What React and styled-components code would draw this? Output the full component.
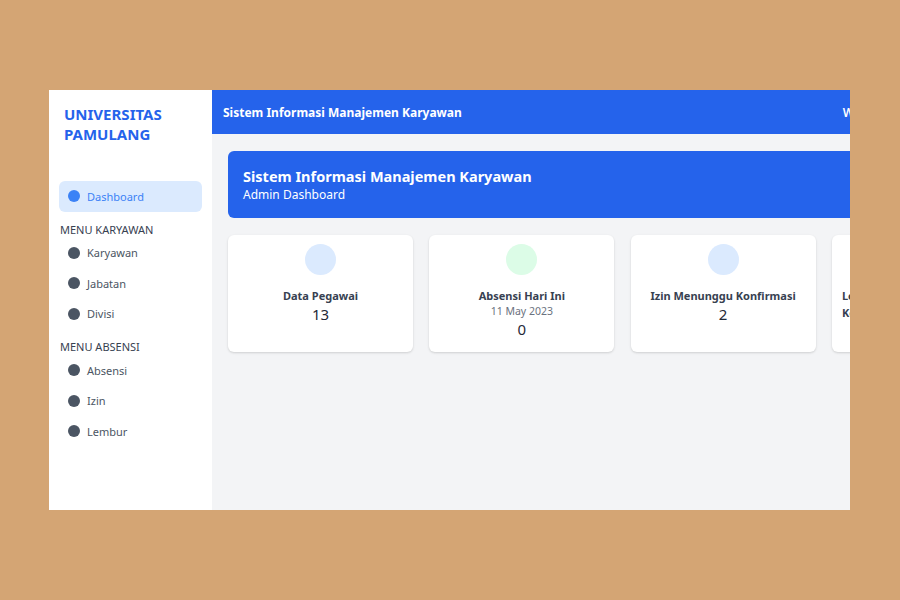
import styled, { createGlobalStyle } from 'styled-components';

const GlobalStyle = createGlobalStyle`
	* {
		box-sizing: border-box;
	}

	body {
		margin: 0;
		background: #d4a574;
		font-family: 'Noto Sans', 'Open Sans', sans-serif;
	}
`;

const Page = styled.div`
	width: 900px;
	height: 600px;
	padding: 90px 50px 90px 49px;
`;

const Frame = styled.div`
	width: 801px;
	height: 420px;
	overflow: hidden;
	display: flex;
`;

const Sidebar = styled.aside`
	flex: 0 0 163px;
	background: #ffffff;
	padding: 14px 10px;
`;

const Brand = styled.h1`
	margin: 0 0 37px 5px;
	font-size: 15px;
	line-height: 20px;
	font-weight: 700;
	color: #2563eb;
`;

const Section = styled.div`
	margin: 11px 0 1px 1px;
	font-size: 11px;
	line-height: 14px;
	color: #374151;
`;

const NavItem = styled.div`
	display: flex;
	align-items: center;
	gap: 7px;
	height: 30.5px;
	padding-left: 9px;
	border-radius: 6px;
	background: ${(props) => props.$active ? '#dbeafe' : 'transparent'};
	font-size: 11px;
	color: ${(props) => props.$active ? '#3b82f6' : '#4b5563'};
`;

const Dot = styled.span`
	width: 12px;
	height: 12px;
	border-radius: 100%;
	background: ${(props) => props.$active ? '#3b82f6' : '#4b5563'};
`;

const Body = styled.div`
	flex: 0 0 823px;
	display: flex;
	flex-direction: column;
	background: #f3f4f6;
`;

const Topbar = styled.header`
	height: 44px;
	display: flex;
	align-items: center;
	justify-content: space-between;
	padding: 0 94px 0 11px;
	background: #2563eb;
	color: #ffffff;
	font-size: 12px;
	font-weight: 700;
`;

const Welcome = styled.span`
	font-weight: 600;
	font-size: 12px;
`;

const Main = styled.main`
	padding: 17px 16px;
	display: flex;
	flex-direction: column;
	gap: 17px;
`;

const Hero = styled.section`
	height: 67px;
	padding: 15px 15px;
	border-radius: 6px;
	background: #2563eb;
	color: #ffffff;
`;

const HeroTitle = styled.h2`
	margin: 0;
	font-size: 14.5px;
	line-height: 20px;
	font-weight: 700;
`;

const HeroSub = styled.p`
	margin: 0;
	font-size: 12px;
	line-height: 18px;
`;

const Cards = styled.div`
	display: grid;
	grid-template-columns: repeat(4, 185px);
	gap: 16.3px;
`;

const Card = styled.div`
	height: 117px;
	padding: 9px 10px;
	display: flex;
	flex-direction: column;
	align-items: center;
	text-align: center;
	border-radius: 6px;
	background: #ffffff;
	box-shadow: 0 1px 3px rgba(0, 0, 0, 0.1), 0 1px 2px rgba(0, 0, 0, 0.06);
	color: #374151;
`;

const Badge = styled.div`
	width: 31px;
	height: 31px;
	margin-bottom: 12px;
	border-radius: 100%;
	background: ${(props) => props.$colour};
	flex-shrink: 0;
`;

const CardTitle = styled.div`
	font-size: 11px;
	line-height: 17px;
	font-weight: 700;
	text-align: ${(props) => props.$justify ? 'justify' : 'center'};
	text-align-last: ${(props) => props.$justify ? 'justify' : 'auto'};
`;

const CardDate = styled.div`
	font-size: 10.5px;
	line-height: 15px;
	color: #6b7280;
`;

const CardValue = styled.div`
	font-size: 15px;
	line-height: 21px;
	color: #1f2937;
`;

const karyawanMenu = ['Karyawan', 'Jabatan', 'Divisi'];
const absensiMenu = ['Absensi', 'Izin', 'Lembur'];

const stats = [
	{ title: 'Data Pegawai', value: '13', colour: '#dbeafe' },
	{ title: 'Absensi Hari Ini', date: '11 May 2023', value: '0', colour: '#dcfce7' },
	{ title: 'Izin Menunggu Konfirmasi', value: '2', colour: '#dbeafe' },
	{ title: 'Lembur Menunggu Konfirmasi', value: '1', colour: '#fef3c7', justify: true }
];

const App = () => {
	return (
		<>
			<GlobalStyle />
			<Page>
				<Frame>
					<Sidebar>
						<Brand>UNIVERSITAS<br />PAMULANG</Brand>
						<NavItem $active>
							<Dot $active />
							Dashboard
						</NavItem>
						<Section>MENU KARYAWAN</Section>
						{karyawanMenu.map((item) => (
							<NavItem key={item}>
								<Dot />
								{item}
							</NavItem>
						))}
						<Section>MENU ABSENSI</Section>
						{absensiMenu.map((item) => (
							<NavItem key={item}>
								<Dot />
								{item}
							</NavItem>
						))}
					</Sidebar>
					<Body>
						<Topbar>
							Sistem Informasi Manajemen Karyawan
							<Welcome>Welcome, Admin</Welcome>
						</Topbar>
						<Main>
							<Hero>
								<HeroTitle>Sistem Informasi Manajemen Karyawan</HeroTitle>
								<HeroSub>Admin Dashboard</HeroSub>
							</Hero>
							<Cards>
								{stats.map((stat) => (
									<Card key={stat.title}>
										<Badge $colour={stat.colour} />
										<CardTitle $justify={stat.justify}>{stat.title}</CardTitle>
										{stat.date && <CardDate>{stat.date}</CardDate>}
										<CardValue>{stat.value}</CardValue>
									</Card>
								))}
							</Cards>
						</Main>
					</Body>
				</Frame>
			</Page>
		</>
	);
};

export default App;
